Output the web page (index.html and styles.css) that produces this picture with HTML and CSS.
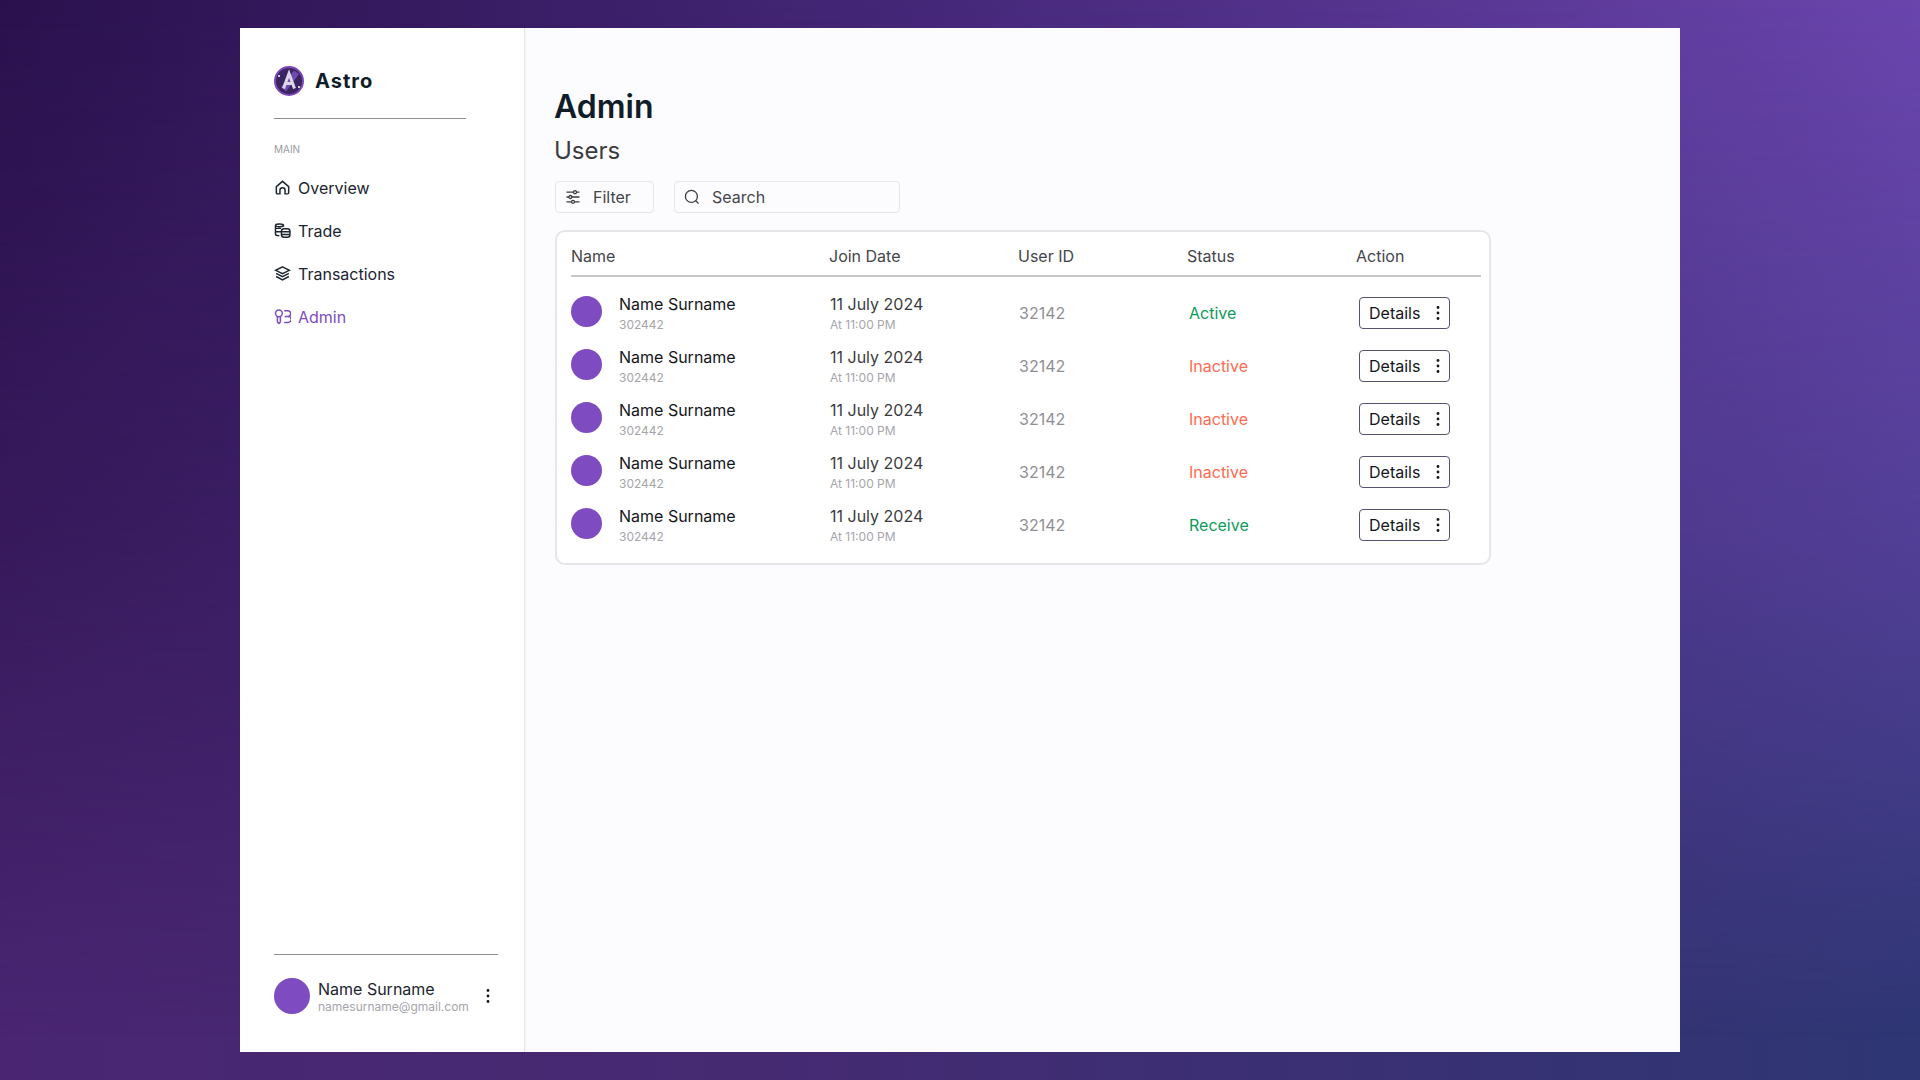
FILE: index.html
```html
<!DOCTYPE html>
<html lang="en">

<head>
  <meta charset="UTF-8">
  <title>Astro - Admin</title>
  <link rel="stylesheet" href="styles.css">
</head>

<body>
  <div class="app">

    <aside class="sidebar">
      <div class="logo">
        <svg class="logo-mark" viewBox="0 0 30 30">
          <circle cx="15" cy="15" r="14" fill="#3a2560" stroke="#7c46b8" stroke-width="2" />
          <path d="M7 21 L20 4.5 L25 8 L12 25.5 Z" fill="#6f4bb0" />
          <path d="M9.5 22.5 L15 7.5 L20.5 22.5 M11.5 17.5 H18.5" fill="none" stroke="#dcd6e8" stroke-width="3" />
          <circle cx="5" cy="10" r="1" fill="#fff" />
          <circle cx="25" cy="21" r="1" fill="#fff" />
        </svg>
        <span class="logo-name">Astro</span>
      </div>
      <div class="logo-line"></div>

      <p class="nav-label">MAIN</p>
      <nav class="nav">
        <a class="nav-item">
          <svg class="nav-icon" viewBox="0 0 16 16"><path d="M2.2 13V7.2L8 2.2l5.8 5V13a1 1 0 0 1-1 1H10.4V10.6a2.4 2.4 0 0 0-4.8 0V14H3.2a1 1 0 0 1-1-1Z" /></svg>
          Overview
        </a>
        <a class="nav-item">
          <svg class="nav-icon" viewBox="0 0 16 16"><path d="M9 4.4V3.2C9 2.3 7.2 1.8 5.2 1.8S1.4 2.3 1.4 3.2v8.4c0 .9 1.3 1.4 3.6 1.4M1.4 6h5.2M1.4 9.2h5.2M1.4 3.4c.6.7 2.2 1.1 3.8 1.1s3.1-.4 3.8-1.1" /><rect x="7" y="6.4" width="8" height="8" rx="2.4" /><path d="M7 9.2h8M7 11.8h8" /></svg>
          Trade
        </a>
        <a class="nav-item">
          <svg class="nav-icon" viewBox="0 0 16 16"><path d="M8 1.8 14.4 5 8 8.2 1.6 5 8 1.8ZM2 7.8 8 11l6-3.2M2 10.8 8 14l6-3.2" /></svg>
          Transactions
        </a>
        <a class="nav-item active">
          <svg class="nav-icon" viewBox="0 0 16 16"><circle cx="4.6" cy="5" r="3.2" /><path d="M3.2 8v5.2l1.4 1.3L6 13.2V8M4.6 4.6v.1M9.6 2.6h3.4a1.6 1.6 0 0 1 0 5.4H10M10 8h3.4a1.6 1.6 0 0 1 0 5.6H9.6" /></svg>
          Admin
        </a>
      </nav>

      <div class="sidebar-foot">
        <div class="user">
          <div class="avatar avatar-big"></div>
          <div class="user-text">
            <div class="user-name">Name Surname</div>
            <div class="user-mail">namesurname@gmail.com</div>
          </div>
          <svg class="dots" viewBox="0 0 4 16"><circle cx="2" cy="2.5" r="1.4" /><circle cx="2" cy="8" r="1.4" /><circle cx="2" cy="13.5" r="1.4" /></svg>
        </div>
      </div>
    </aside>

    <main class="content">
      <h1>Admin</h1>
      <h2>Users</h2>

      <div class="tools">
        <button class="tool tool-filter">
          <svg class="tool-icon" viewBox="0 0 16 16"><path d="M1.5 3.2h13M1.5 8h13M1.5 12.8h13" /><circle cx="10" cy="3.2" r="1.5" fill="#fcfcff" /><circle cx="5.4" cy="8" r="1.5" fill="#fcfcff" /><circle cx="8" cy="12.8" r="1.5" fill="#fcfcff" /></svg>
          Filter
        </button>
        <div class="tool tool-search">
          <svg class="tool-icon" viewBox="0 0 16 16"><circle cx="7.4" cy="7.4" r="6" /><path d="m11.8 11.8 2.8 2.8" /></svg>
          Search
        </div>
      </div>

      <section class="card">
        <div class="table-head">
          <span>Name</span>
          <span>Join Date</span>
          <span>User ID</span>
          <span>Status</span>
          <span>Action</span>
        </div>

        <div class="row">
          <div class="who"><div class="avatar"></div><div><div class="who-name">Name Surname</div><div class="sub">302442</div></div></div>
          <div class="date"><div class="date-day">11 July 2024</div><div class="sub">At 11:00 PM</div></div>
          <div class="uid">32142</div>
          <div class="status good">Active</div>
          <div><button class="details">Details <svg class="dots" viewBox="0 0 4 16"><circle cx="2" cy="2.5" r="1.4" /><circle cx="2" cy="8" r="1.4" /><circle cx="2" cy="13.5" r="1.4" /></svg></button></div>
        </div>
        <div class="row">
          <div class="who"><div class="avatar"></div><div><div class="who-name">Name Surname</div><div class="sub">302442</div></div></div>
          <div class="date"><div class="date-day">11 July 2024</div><div class="sub">At 11:00 PM</div></div>
          <div class="uid">32142</div>
          <div class="status bad">Inactive</div>
          <div><button class="details">Details <svg class="dots" viewBox="0 0 4 16"><circle cx="2" cy="2.5" r="1.4" /><circle cx="2" cy="8" r="1.4" /><circle cx="2" cy="13.5" r="1.4" /></svg></button></div>
        </div>
        <div class="row">
          <div class="who"><div class="avatar"></div><div><div class="who-name">Name Surname</div><div class="sub">302442</div></div></div>
          <div class="date"><div class="date-day">11 July 2024</div><div class="sub">At 11:00 PM</div></div>
          <div class="uid">32142</div>
          <div class="status bad">Inactive</div>
          <div><button class="details">Details <svg class="dots" viewBox="0 0 4 16"><circle cx="2" cy="2.5" r="1.4" /><circle cx="2" cy="8" r="1.4" /><circle cx="2" cy="13.5" r="1.4" /></svg></button></div>
        </div>
        <div class="row">
          <div class="who"><div class="avatar"></div><div><div class="who-name">Name Surname</div><div class="sub">302442</div></div></div>
          <div class="date"><div class="date-day">11 July 2024</div><div class="sub">At 11:00 PM</div></div>
          <div class="uid">32142</div>
          <div class="status bad">Inactive</div>
          <div><button class="details">Details <svg class="dots" viewBox="0 0 4 16"><circle cx="2" cy="2.5" r="1.4" /><circle cx="2" cy="8" r="1.4" /><circle cx="2" cy="13.5" r="1.4" /></svg></button></div>
        </div>
        <div class="row">
          <div class="who"><div class="avatar"></div><div><div class="who-name">Name Surname</div><div class="sub">302442</div></div></div>
          <div class="date"><div class="date-day">11 July 2024</div><div class="sub">At 11:00 PM</div></div>
          <div class="uid">32142</div>
          <div class="status good">Receive</div>
          <div><button class="details">Details <svg class="dots" viewBox="0 0 4 16"><circle cx="2" cy="2.5" r="1.4" /><circle cx="2" cy="8" r="1.4" /><circle cx="2" cy="13.5" r="1.4" /></svg></button></div>
        </div>
      </section>
    </main>

  </div>
</body>

</html>
```

FILE: styles.css
```css
* {
  box-sizing: border-box;
}

html,
body {
  height: 100%;
}

body {
  margin: 0;
  padding: 28px 240px;
  font-family: Inter, 'Noto Sans', sans-serif;
  color: #101c28;
  background: linear-gradient(to right, #4a2672 0%, #452a72 40%, #2e3674 100%);
}

/* top edge of the backdrop, faded into the bottom edge */
body::before {
  content: "";
  position: fixed;
  inset: 0;
  z-index: -1;
  background: linear-gradient(to right, #2a114d 0%, #46287a 50%, #6a45ad 100%);
  -webkit-mask-image: linear-gradient(to bottom, #000 0%, rgba(0, 0, 0, 0.6) 50%, transparent 96%);
  mask-image: linear-gradient(to bottom, #000 0%, rgba(0, 0, 0, 0.6) 50%, transparent 96%);
}

.app {
  height: 1024px;
  display: flex;
  background-color: #fcfcff;
}

.sidebar {
  width: 285px;
  flex-shrink: 0;
  padding: 38px 26px 0 34px;
  display: flex;
  flex-direction: column;
  background-color: #ffffff;
  border-right: 1px solid #e6e6ea;
  box-shadow: 1px 0 2px rgba(0, 0, 0, 0.04);
}

.logo {
  display: flex;
  align-items: center;
  gap: 11px;
  height: 30px;
}

.logo-mark {
  width: 30px;
  height: 30px;
}

.logo-name {
  font-size: 20px;
  font-weight: 700;
  letter-spacing: 1px;
}

.logo-line {
  width: 192px;
  margin-top: 22px;
  border-top: 1px solid #8f8f94;
}

.nav-label {
  margin: 24px 0 0;
  font-size: 10px;
  line-height: 12px;
  color: #9a9a9f;
}

.nav {
  margin-top: 11px;
  display: flex;
  flex-direction: column;
}

.nav-item {
  height: 43px;
  display: flex;
  align-items: center;
  gap: 7px;
  font-size: 16px;
  color: #1c2530;
}

.nav-icon {
  width: 17px;
  height: 17px;
  fill: none;
  stroke: #1c2530;
  stroke-width: 1.4;
}

.active {
  color: #7e4cc0;
}

.active .nav-icon {
  stroke: #7e4cc0;
}

.sidebar-foot {
  margin-top: auto;
  height: 98px;
  border-top: 1px solid #8f8f94;
  padding-top: 23px;
}

.user {
  display: flex;
  align-items: center;
  gap: 8px;
}

.user-text {
  flex: 1;
}

.user-name {
  font-size: 16px;
  line-height: 20px;
  color: #1c2530;
}

.user-mail {
  font-size: 12px;
  line-height: 15px;
  color: #a5a5aa;
}

.user .dots {
  margin-right: 8px;
}

.avatar {
  width: 31px;
  height: 31px;
  flex-shrink: 0;
  border-radius: 50%;
  background-color: #7e4cc0;
}

.avatar-big {
  width: 36px;
  height: 36px;
}

.dots {
  width: 4px;
  height: 16px;
  fill: #15151c;
}

.content {
  flex: 1;
  padding: 0 30px;
}

h1 {
  margin: 59px 0 0 -1px;
  font-size: 32px;
  line-height: 40px;
  font-weight: 600;
}

h2 {
  margin: 9px 0 0 -1px;
  font-size: 24px;
  line-height: 30px;
  font-weight: 400;
  color: #3b3b40;
}

.tools {
  display: flex;
  gap: 20px;
  margin-top: 15px;
}

.tool {
  height: 32px;
  display: flex;
  align-items: center;
  gap: 12px;
  padding: 0 9px;
  border: 1px solid #e6e6ea;
  border-radius: 4px;
  background-color: #fcfcff;
  font-family: inherit;
  font-size: 16px;
  color: #45454a;
}

.tool-filter {
  width: 99px;
}

.tool-search {
  width: 226px;
}

.tool-icon {
  width: 16px;
  height: 16px;
  fill: none;
  stroke: #3b3b40;
  stroke-width: 1.3;
}

.card {
  width: 936px;
  height: 335px;
  margin-top: 17px;
  padding: 7px 8px 0 14px;
  border: 2px solid #e6e6ea;
  border-radius: 10px;
  background-color: #ffffff;
}

.table-head,
.row {
  display: grid;
  grid-template-columns: 258px 189px 169px 169px 1fr;
  align-items: center;
}

.table-head {
  height: 38px;
  padding-bottom: 2px;
  border-bottom: 2px solid #c8c8cc;
  font-size: 16px;
  color: #45454a;
}

.row {
  height: 53px;
  font-size: 16px;
}

.table-head + .row {
  margin-top: 9px;
}

.who {
  display: flex;
  align-items: center;
  gap: 17px;
}

.who .avatar {
  margin-bottom: 3px;
}

.who-name,
.date-day {
  line-height: 24px;
  margin-bottom: 1px;
}

.who-name {
  color: #15151c;
}

.sub {
  font-size: 12px;
  line-height: 16px;
  color: #a5a5aa;
}

.date {
  padding-left: 1px;
  color: #3b3b40;
}

.uid {
  padding-left: 1px;
  color: #8f8f94;
}

.status {
  padding-left: 2px;
}

.good {
  color: #0e9a5a;
}

.bad {
  color: #ff6a50;
}

.details {
  width: 91px;
  height: 32px;
  margin-left: 3px;
  padding: 0 9px;
  display: flex;
  align-items: center;
  justify-content: space-between;
  border: 1px solid #5a5070;
  border-radius: 4px;
  background-color: #ffffff;
  font-family: inherit;
  font-size: 16px;
  color: #15151c;
}
```
